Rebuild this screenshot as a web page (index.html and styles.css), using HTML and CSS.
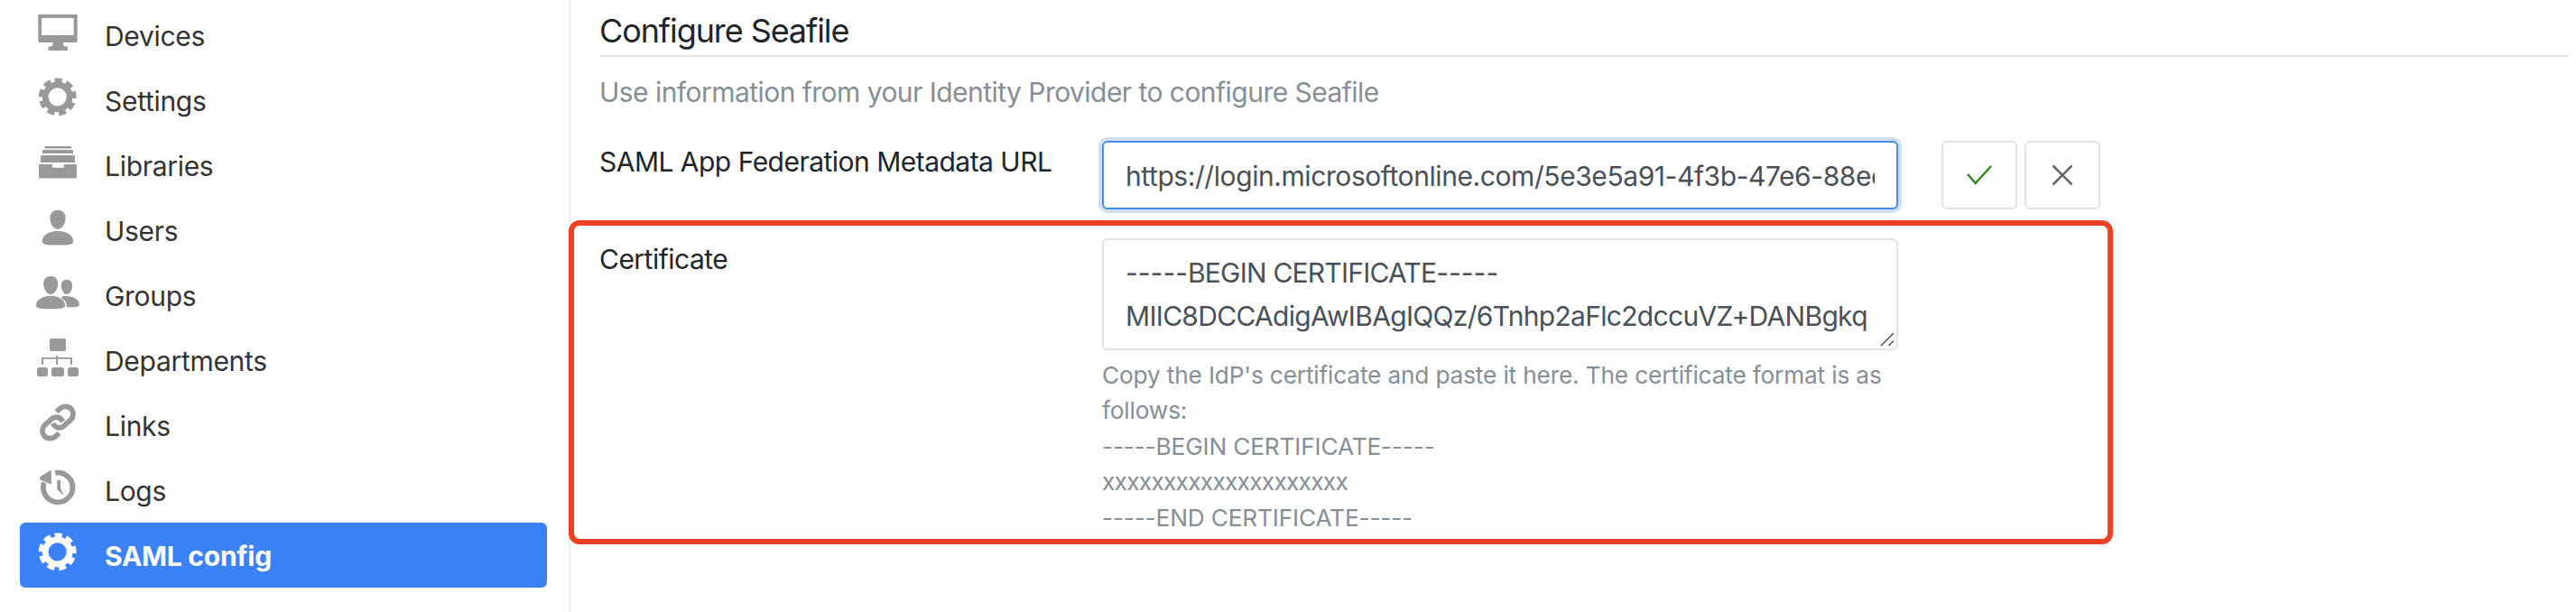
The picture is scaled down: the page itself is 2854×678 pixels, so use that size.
FILE: index.html
```html
<!DOCTYPE html>
<html lang="en">
<head>
<meta charset="utf-8">
<title>SAML config</title>
<link rel="stylesheet" href="styles.css">
</head>
<body>
<div class="layout">
  <nav class="sidebar">
    <a class="nav-item"><svg class="nav-icon" viewBox="0 0 48 48"><path fill-rule="evenodd" d="M3.3 4h41.4q1 0 1 1v29q0 1-1 1H30v1.500q0 3 2.500 3h2.500V44h-21.500v-4.500h2.500q2.500 0 2.500-3V35H3.300q-1 0-1-1V5q0-1 1-1zM6 8v19h35.700V8z"/></svg><span>Devices</span></a>
    <a class="nav-item"><svg class="nav-icon" viewBox="0 0 48 48"><g class="gear"><circle cx="23.700" cy="23.300" r="13.500" stroke-width="6.800"/><circle cx="23.700" cy="23.300" r="18.500" stroke-width="4.800" pathLength="90" stroke-dasharray="6.300 3.700" transform="rotate(-99.500 23.700 23.300)"/></g></svg><span>Settings</span></a>
    <a class="nav-item"><svg class="nav-icon" viewBox="0 0 48 48"><path d="M9.500 6h29.500v2.500h-29.500zM8 10h32q1 0 1 1v3H7v-3q0-1 1-1zM6 16h36q1 0 1 1v7H5v-7q0-1 1-1zM4 26h14v2.500q0 1.200 1.200 1.200h10.600q1.200 0 1.200-1.200V26h13q1 0 1 1v13.500q0 1-1 1H4q-1 0-1-1V27q0-1 1-1z"/></svg><span>Libraries</span></a>
    <a class="nav-item"><svg class="nav-icon" viewBox="0 0 48 48"><path d="M24 4.800c5.300 0 8.600 3.600 8.600 8.800 0 6-3.600 12.400-8.600 12.400s-8.600-6.400-8.600-12.400c0-5.200 3.300-8.800 8.600-8.800zM24 28c9.500 0 17.200 4.700 17.200 10.900 0 3.800-3.200 4.600-17.200 4.600s-17.200-.8-17.200-4.600C6.800 32.700 14.500 28 24 28z"/></svg><span>Users</span></a>
    <a class="nav-item"><svg class="nav-icon" viewBox="0 0 48 48"><path d="M16.200 6c5 0 8 3.400 8 8.200 0 5.600-3.300 11.800-8 11.800s-8-6.200-8-11.800c0-4.800 3-8.200 8-8.200zM16 27.800c8.800 0 16 4.500 16 10.400 0 3.200-3 4-16 4s-16-.8-16-4c0-5.900 7.200-10.400 16-10.400zM34 9.800c3.800 0 6.100 2.800 6.100 6.700 0 4.600-2.500 9.500-6.100 9.500s-6.100-4.900-6.100-9.500c0-3.900 2.300-6.700 6.100-6.700zM29.500 28.200c10.500-1 18.500 3.400 18.500 8.800 0 2.500-2 3.200-5 3.200h-9.500c.5-4.200-.4-7-5.500-9.800z"/></svg><span>Groups</span></a>
    <a class="nav-item"><svg class="nav-icon" viewBox="0 0 48 48"><rect x="15" y="3" width="18" height="14" rx="2"/><path d="M22 22h2v2h16v8h-2v-6.200H24V32h-2v-6.200H8V32H6v-8h16z"/><rect x="1" y="35" width="12" height="10" rx="2.500"/><rect x="17" y="35" width="14" height="10" rx="2.500"/><rect x="35" y="35" width="12" height="10" rx="2.500"/></svg><span>Departments</span></a>
    <a class="nav-item"><svg class="nav-icon" viewBox="0 0 48 48"><g class="chain"><path d="M25.500 35.800l-4.300 3.900C17 43 11.500 42 8.700 38.500 6 35 6.500 30 9.500 27l8-7.200C21.500 16.700 27 18 29.500 23"/><path d="M25.500 35.800l-4.300 3.900C17 43 11.500 42 8.700 38.500 6 35 6.500 30 9.500 27l8-7.200C21.500 16.700 27 18 29.500 23" transform="rotate(180 24 24)"/></g></svg><span>Links</span></a>
    <a class="nav-item"><svg class="nav-icon" viewBox="0 0 48 48"><path class="dial" d="M21.200 8A16.300 16.300 0 1 1 8.900 18.500"/><path d="M4 12.500L16 5q.8-.2.8.8v15L5.500 16q-2-1.200-1.500-3.500zM24.300 15.800h1.700q1 0 1 1V25l3.800 8-7.500-6.800v-9.400q0-1 1-1z"/></svg><span>Logs</span></a>
    <a class="nav-item active"><svg class="nav-icon" viewBox="0 0 48 48"><g class="gear"><circle cx="23.700" cy="23.300" r="13.500" stroke-width="6.800"/><circle cx="23.700" cy="23.300" r="18.500" stroke-width="4.800" pathLength="90" stroke-dasharray="6.300 3.700" transform="rotate(-99.500 23.700 23.300)"/></g></svg><span>SAML config</span></a>
  </nav>
  <main class="content">
    <h2 class="heading">Configure Seafile</h2>
    <p class="intro">Use information from your Identity Provider to configure Seafile</p>
    <div class="row">
      <label class="label">SAML App Federation Metadata URL</label>
      <input class="field focused" type="text" value="https://login.microsoftonline.com/5e3e5a91-4f3b-47e6-88ee-0c5a1f27b3d4/federationmetadata.xml">
      <div class="actions">
        <button class="btn" aria-label="Submit"><svg width="30" height="26" viewBox="0 0 30 26"><path class="check" d="M2 12l8.700 10L28 3"/></svg></button>
        <button class="btn" aria-label="Cancel"><svg width="30" height="26" viewBox="0 0 30 26"><path class="cross" d="M4.500 2.500l21 21M25.500 2.500l-21 21"/></svg></button>
      </div>
    </div>
    <section class="highlight">
      <label class="label">Certificate</label>
      <div class="cert">
        <div class="field area"><div>-----<span class="caps">BEGIN CERTIFICATE</span>-----</div><div class="key-data">MIIC8DCCAdigAwIBAgIQQz/6Tnhp2aFlc2dccuVZ+DANBgkq</div>
          <svg class="grip" viewBox="0 0 16 16"><path d="M1 15L15 1M9.500 15L15 9.500"/></svg>
        </div>
        <p class="help">Copy the IdP's certificate and paste it here. The certificate format is as<br>follows:<br>-----BEGIN CERTIFICATE-----<br><span class="placeholder">xxxxxxxxxxxxxxxxxxxx</span><br>-----END CERTIFICATE-----</p>
      </div>
    </section>
  </main>
</div>
</body>
</html>
```
FILE: styles.css
```css
* { box-sizing: border-box; }
body {
  margin: 0;
  background: #fff;
  color: #212529;
  font: 30px/45px Inter, "Liberation Sans", sans-serif;
  overflow: hidden;
}
.layout { display: flex; height: 678px; }
.sidebar {
  width: 632px;
  flex: none;
  padding: 3px 24px 0 22px;
  border-right: 2px solid #ededed;
}
.nav-item {
  display: flex;
  align-items: center;
  height: 72px;
  padding: 2px 0 0 18px;
  border-radius: 6px;
  color: #333;
  letter-spacing: -0.3px;
  white-space: nowrap;
}
.nav-icon {
  width: 48px;
  height: 48px;
  margin: -8px 28px 0 0;
  flex: none;
  fill: #999;
  color: #999;
  overflow: visible;
}
.active { background: #3b82f9; color: #fff; font-weight: 700; letter-spacing: -0.25px; }
.active .nav-icon { fill: #fff; color: #fff; }
.gear { fill: none; stroke: currentColor; }
.chain { fill: none; stroke: currentColor; stroke-width: 5.8; }
.dial { fill: none; stroke: currentColor; stroke-width: 5.8; }

.content { flex: 1; padding: 9px 8px 0 32px; white-space: nowrap; }
.heading {
  margin: 0;
  height: 54px;
  border-bottom: 2px solid #e1e6ea;
  font-size: 36px;
  font-weight: 400;
  line-height: 50px;
  letter-spacing: -1.1px;
}
.intro { margin: 17px 0 0; color: #868e96; letter-spacing: -0.54px; }
.row { display: flex; margin-top: 31px; height: 76px; }
.label { width: 557px; flex: none; padding-top: 1px; letter-spacing: -0.52px; }
.field {
  width: 882px;
  border: 2px solid #dfe3ea;
  border-radius: 6px;
  padding: 0 24px;
  color: #495057;
  background: #fff;
  font: 30px/48px Inter, "Liberation Sans", sans-serif;
  outline: none;
}
.focused {
  height: 76px;
  border-color: #438fe8;
  box-shadow: 0 0 0 4px #d2dff2;
  padding-top: 2px;
  letter-spacing: -0.42px;
}
.actions { display: flex; gap: 8px; margin-left: 48px; }
.btn {
  display: flex;
  align-items: center;
  justify-content: center;
  width: 84px;
  height: 76px;
  padding: 0;
  border: 2px solid #dfe3ea;
  border-radius: 6px;
  background: #fff;
}
.check { fill: none; stroke: #2f8618; stroke-width: 2.4; }
.cross { fill: none; stroke: #666; stroke-width: 2.6; }
.highlight {
  display: flex;
  width: 1711px;
  height: 359px;
  margin: 12px 0 0 -34px;
  padding: 14px 0 0 28px;
  border: 6px solid #ed4025;
  border-radius: 12px;
}
.area { position: relative; height: 124px; padding: 12px 24px; }
.caps { letter-spacing: -0.78px; }
.key-data { letter-spacing: -0.69px; }
.grip {
  position: absolute;
  right: 2px;
  bottom: 2px;
  width: 16px;
  height: 16px;
  fill: none;
  stroke: #555;
  stroke-width: 1.6;
}
.help {
  margin: 8px 0 0;
  color: #868e96;
  font-size: 26.25px;
  line-height: 39.4px;
  letter-spacing: -0.17px;
}
.placeholder { letter-spacing: -0.73px; }
```
